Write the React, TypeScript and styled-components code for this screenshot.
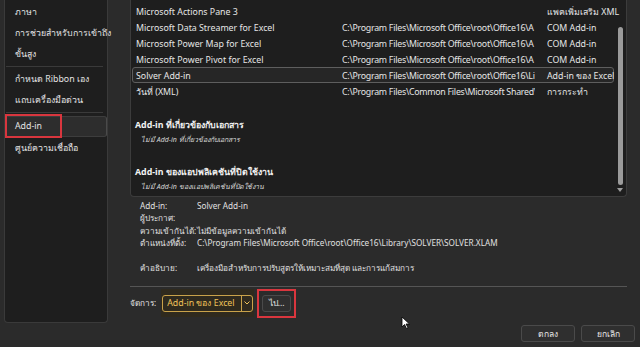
import styled, { createGlobalStyle, css } from 'styled-components';

const GlobalStyle = createGlobalStyle`
  html, body {
    margin: 0;
    padding: 0;
    background: #2b2b2b;
  }
  body {
    font-family: 'Noto Sans', 'Open Sans', sans-serif;
    color: #e6e6e6;
    font-size: 8.8px;
  }
`;

const Window = styled.div`
  width: 640px;
  height: 347px;
  display: grid;
  grid-template-columns: 108px minmax(0, 1fr);
  overflow: hidden;
  position: relative;
  background: #2b2b2b;
`;

const Sidebar = styled.nav`
  margin-left: 4px;
  height: 323px;
  box-sizing: border-box;
  background: #1e1e1e;
  border: 1px solid #3a3a3a;
  border-top: none;
  border-radius: 0 0 4px 4px;
  padding-top: 2px;
  display: flex;
  flex-direction: column;
`;

const NavItem = styled.div<{ $active?: boolean }>`
  position: relative;
  height: 21px;
  line-height: 21px;
  padding-left: 10px;
  font-size: 8.8px;
  color: #e4e4e4;
  white-space: nowrap;
  ${(p) =>
    p.$active &&
    css`
      margin: 1px 0 1px 0;
      background: #2d2d2d;
      border: 1px solid #3d3d3d;
      border-right-color: #4a4a4a;
      border-radius: 3px;
      padding-left: 9px;
      height: 19px;
      line-height: 19px;
    `}
`;

const NavDivider = styled.div`
  height: 1px;
  background: #3a3a3a;
  margin: 1px 4px 2px 1px;
`;

const Highlight = styled.span`
  position: absolute;
  left: -1px;
  top: -3px;
  width: 57px;
  height: 24px;
  border: 2px solid #d9363e;
  box-sizing: border-box;
`;

const Main = styled.main`
  padding: 0 13px 0 22px;
  display: flex;
  flex-direction: column;
  min-width: 0;
`;

const ListBox = styled.div`
  height: 197px;
  box-sizing: border-box;
  background: #1e1e1e;
  border: 1px solid #3c3c3c;
  border-top: none;
  border-radius: 0 0 4px 4px;
  display: flex;
`;

const ListContent = styled.div`
  flex: 1;
  padding-top: 3px;
  min-width: 0;
`;

const Row = styled.div<{ $selected?: boolean }>`
  display: grid;
  grid-template-columns: 194px 193px minmax(0, 1fr);
  column-gap: 12px;
  height: 16px;
  line-height: 16px;
  box-sizing: border-box;
  padding-left: 3px;
  margin-left: 1px;
  border: 1px solid transparent;
  border-radius: 3px;
  white-space: nowrap;
  ${(p) =>
    p.$selected &&
    css`
      background: #262626;
      border-color: #5e5e5e;
    `}
  span {
    overflow: hidden;
    line-height: 14px;
    padding-top: 1px;
  }
  span:nth-child(2) {
    letter-spacing: -0.25px;
  }
  span:last-child {
    overflow: visible;
  }
`;

const GroupTitle = styled.div`
  font-weight: bold;
  padding-left: 4px;
  font-size: 8.8px;
  color: #f2f2f2;
  height: 16px;
  line-height: 16px;
`;

const GroupEmpty = styled.div`
  font-style: italic;
  font-size: 7px;
  padding-left: 10px;
  color: #d8d8d8;
  height: 14px;
  line-height: 14px;
`;

const Spacer = styled.div<{ $h: number }>`
  height: ${(p) => p.$h}px;
`;

const ScrollBar = styled.div`
  width: 12px;
  flex-shrink: 0;
  display: flex;
  flex-direction: column;
  align-items: center;
  padding-top: 27px;
  padding-bottom: 4px;
  box-sizing: border-box;
`;

const Thumb = styled.div`
  width: 5px;
  flex: 1;
  background: #9b9b9b;
  border-radius: 3px;
`;

const ArrowDown = styled.div`
  margin-top: 3px;
  width: 0;
  height: 0;
  border-left: 3px solid transparent;
  border-right: 3px solid transparent;
  border-top: 4px solid #9b9b9b;
`;

const Details = styled.div`
  display: grid;
  grid-template-columns: 57px 1fr;
  grid-auto-rows: 12.4px;
  padding: 3px 0 0 10px;
  font-size: 8.2px;
  line-height: 12.4px;
  white-space: nowrap;
  color: #e0e0e0;
`;

const Rule = styled.div`
  height: 1px;
  background: #555;
  margin: 12px 0 0 0;
`;

const ManageRow = styled.div`
  display: flex;
  align-items: center;
  height: 28px;
  margin-top: 2px;
  font-size: 8.2px;
  gap: 6px;
`;

const SelectWrap = styled.div`
  display: flex;
  align-items: center;
  height: 28px;
  padding: 0 1px;
  margin-left: -1px;
  background: #2f2a1e;
`;

const Select = styled.div`
  display: flex;
  width: 91px;
  height: 17px;
  box-sizing: border-box;
  border: 1px solid #c9a24a;
  border-radius: 3px;
  color: #f0c35a;
  font-size: 8.8px;
  line-height: 15px;
  overflow: hidden;
`;

const SelectText = styled.span`
  flex: 1;
  padding-left: 4px;
  white-space: nowrap;
`;

const SelectArrow = styled.span`
  width: 10px;
  border-left: 1px solid #c9a24a;
  display: flex;
  align-items: center;
  justify-content: center;
`;

const GoFrame = styled.div`
  border: 2px solid #d9363e;
  padding: 4px 3px;
  margin-left: -3px;
`;

const Button = styled.div<{ $w: number }>`
  width: ${(p) => p.$w}px;
  height: 17px;
  box-sizing: border-box;
  border: 1px solid #4a4a4a;
  border-radius: 3px;
  background: #2f2f2f;
  display: flex;
  align-items: center;
  justify-content: center;
  font-size: 8.5px;
  color: #e6e6e6;
`;

const Footer = styled.div`
  display: flex;
  justify-content: flex-end;
  gap: 6px;
  margin-top: 8px;
  margin-right: -8px;
`;

const Cursor = styled.svg`
  position: absolute;
  left: 401px;
  top: 316px;
`;

const rows = [
  ['Microsoft Actions Pane 3', '', 'แพคเพิ่มเสริม XML'],
  ['Microsoft Data Streamer for Excel', 'C:\\Program Files\\Microsoft Office\\root\\Office16\\A', 'COM Add-in'],
  ['Microsoft Power Map for Excel', 'C:\\Program Files\\Microsoft Office\\root\\Office16\\A', 'COM Add-in'],
  ['Microsoft Power Pivot for Excel', 'C:\\Program Files\\Microsoft Office\\root\\Office16\\A', 'COM Add-in'],
  ['Solver Add-in', 'C:\\Program Files\\Microsoft Office\\root\\Office16\\Li', 'Add-in ของ Excel'],
  ['วันที่ (XML)', 'C:\\Program Files\\Common Files\\Microsoft Shared\\', 'การกระทำ'],
];

export default function App() {
  return (
    <>
      <GlobalStyle />
      <Window>
        <Sidebar>
          <NavItem>ภาษา</NavItem>
          <NavItem>การช่วยสำหรับการเข้าถึง</NavItem>
          <NavItem>ขั้นสูง</NavItem>
          <NavDivider />
          <NavItem>กำหนด Ribbon เอง</NavItem>
          <NavItem>แถบเครื่องมือด่วน</NavItem>
          <NavDivider />
          <NavItem $active>
            <Highlight />
            Add-in
          </NavItem>
          <NavItem>ศูนย์ความเชื่อถือ</NavItem>
        </Sidebar>

        <Main>
          <ListBox>
            <ListContent>
              {rows.map((r, i) => (
                <Row key={i} $selected={i === 4}>
                  <span>{r[0]}</span>
                  <span>{r[1]}</span>
                  <span>{r[2]}</span>
                </Row>
              ))}
              <Spacer $h={18} />
              <GroupTitle>Add-in ที่เกี่ยวข้องกับเอกสาร</GroupTitle>
              <GroupEmpty>ไม่มี Add-in ที่เกี่ยวข้องกับเอกสาร</GroupEmpty>
              <Spacer $h={17} />
              <GroupTitle>Add-in ของแอปพลิเคชันที่ปิดใช้งาน</GroupTitle>
              <GroupEmpty>ไม่มี Add-in ของแอปพลิเคชันที่ปิดใช้งาน</GroupEmpty>
            </ListContent>
            <ScrollBar>
              <Thumb />
              <ArrowDown />
            </ScrollBar>
          </ListBox>

          <Details>
            <span>Add-in:</span>
            <span>Solver Add-in</span>
            <span>ผู้ประกาศ:</span>
            <span />
            <span>ความเข้ากันได้:</span>
            <span>ไม่มีข้อมูลความเข้ากันได้</span>
            <span>ตำแหน่งที่ตั้ง:</span>
            <span>C:\Program Files\Microsoft Office\root\Office16\Library\SOLVER\SOLVER.XLAM</span>
            <span />
            <span />
            <span>คำอธิบาย:</span>
            <span>เครื่องมือสำหรับการปรับสูตรให้เหมาะสมที่สุด และการแก้สมการ</span>
          </Details>

          <Rule />

          <ManageRow>
            <span>จัดการ:</span>
            <SelectWrap>
              <Select>
                <SelectText>Add-in ของ Excel</SelectText>
                <SelectArrow>
                  <svg width="6" height="4" viewBox="0 0 6 4">
                    <path d="M0.5 0.5 L3 3 L5.5 0.5" fill="none" stroke="#f0c35a" strokeWidth="1" />
                  </svg>
                </SelectArrow>
              </Select>
            </SelectWrap>
            <GoFrame>
              <Button $w={29}>ไป...</Button>
            </GoFrame>
          </ManageRow>

          <Footer>
            <Button $w={54}>ตกลง</Button>
            <Button $w={54}>ยกเลิก</Button>
          </Footer>
        </Main>

        <Cursor width="10" height="14" viewBox="0 0 10 14">
          <path d="M1 1 L1 11 L3.5 8.5 L5.5 12.5 L7 11.8 L5 8 L8.5 8 Z" fill="#fff" stroke="#000" strokeWidth="0.8" />
        </Cursor>
      </Window>
    </>
  );
}
